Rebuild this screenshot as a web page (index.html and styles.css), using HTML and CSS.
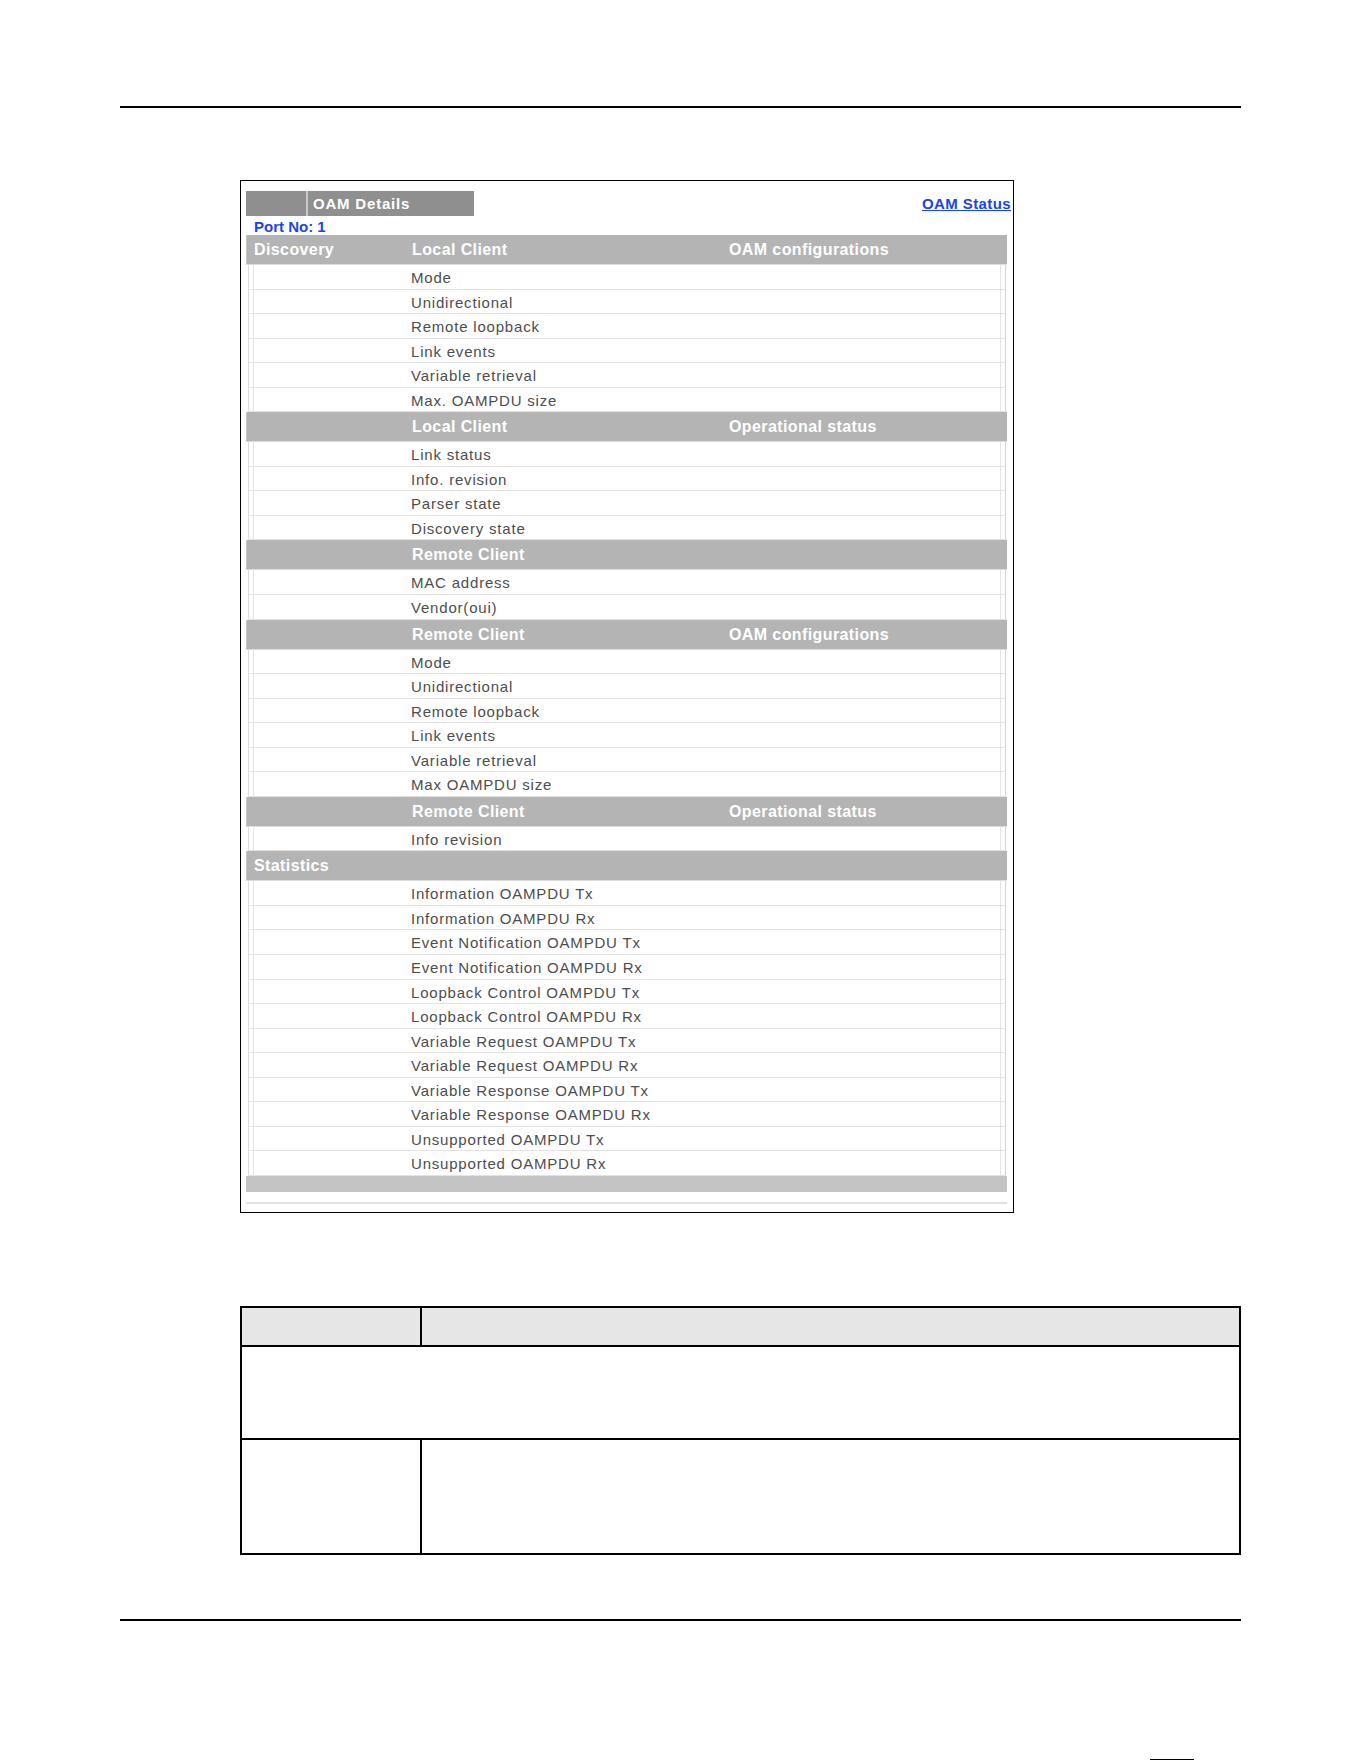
FILE: index.html
```
<!DOCTYPE html>
<html lang="en">
<head>
    <meta charset="UTF-8">
    <title>OAM Details</title>
    <link rel="stylesheet" href="styles.css">
</head>
<body>
    <div class="page">
        <div class="rule"></div>

        <!-- Screenshot of the OAM Details screen -->
        <div class="shot">
            <div class="title-row">
                <div class="title-bar">
                    <span class="title-blank"></span>
                    <span class="title-text">OAM Details</span>
                </div>
                <a class="status-link" href="#">OAM Status</a>
            </div>
            <div class="port">Port No: 1</div>

            <div class="oam-table">
                <div class="head-row"><span>Discovery</span><span>Local Client</span><span>OAM configurations</span></div>
                <div class="data-row"><div class="cells"><span></span><span>Mode</span><span></span></div></div>
                <div class="data-row"><div class="cells"><span></span><span>Unidirectional</span><span></span></div></div>
                <div class="data-row"><div class="cells"><span></span><span>Remote loopback</span><span></span></div></div>
                <div class="data-row"><div class="cells"><span></span><span>Link events</span><span></span></div></div>
                <div class="data-row"><div class="cells"><span></span><span>Variable retrieval</span><span></span></div></div>
                <div class="data-row"><div class="cells"><span></span><span>Max. OAMPDU size</span><span></span></div></div>

                <div class="head-row"><span></span><span>Local Client</span><span>Operational status</span></div>
                <div class="data-row"><div class="cells"><span></span><span>Link status</span><span></span></div></div>
                <div class="data-row"><div class="cells"><span></span><span>Info. revision</span><span></span></div></div>
                <div class="data-row"><div class="cells"><span></span><span>Parser state</span><span></span></div></div>
                <div class="data-row"><div class="cells"><span></span><span>Discovery state</span><span></span></div></div>

                <div class="head-row"><span></span><span>Remote Client</span><span></span></div>
                <div class="data-row"><div class="cells"><span></span><span>MAC address</span><span></span></div></div>
                <div class="data-row"><div class="cells"><span></span><span>Vendor(oui)</span><span></span></div></div>

                <div class="head-row"><span></span><span>Remote Client</span><span>OAM configurations</span></div>
                <div class="data-row"><div class="cells"><span></span><span>Mode</span><span></span></div></div>
                <div class="data-row"><div class="cells"><span></span><span>Unidirectional</span><span></span></div></div>
                <div class="data-row"><div class="cells"><span></span><span>Remote loopback</span><span></span></div></div>
                <div class="data-row"><div class="cells"><span></span><span>Link events</span><span></span></div></div>
                <div class="data-row"><div class="cells"><span></span><span>Variable retrieval</span><span></span></div></div>
                <div class="data-row"><div class="cells"><span></span><span>Max OAMPDU size</span><span></span></div></div>

                <div class="head-row"><span></span><span>Remote Client</span><span>Operational status</span></div>
                <div class="data-row"><div class="cells"><span></span><span>Info revision</span><span></span></div></div>

                <div class="head-row"><span>Statistics</span><span></span><span></span></div>
                <div class="data-row"><div class="cells"><span></span><span>Information OAMPDU Tx</span><span></span></div></div>
                <div class="data-row"><div class="cells"><span></span><span>Information OAMPDU Rx</span><span></span></div></div>
                <div class="data-row"><div class="cells"><span></span><span>Event Notification OAMPDU Tx</span><span></span></div></div>
                <div class="data-row"><div class="cells"><span></span><span>Event Notification OAMPDU Rx</span><span></span></div></div>
                <div class="data-row"><div class="cells"><span></span><span>Loopback Control OAMPDU Tx</span><span></span></div></div>
                <div class="data-row"><div class="cells"><span></span><span>Loopback Control OAMPDU Rx</span><span></span></div></div>
                <div class="data-row"><div class="cells"><span></span><span>Variable Request OAMPDU Tx</span><span></span></div></div>
                <div class="data-row"><div class="cells"><span></span><span>Variable Request OAMPDU Rx</span><span></span></div></div>
                <div class="data-row"><div class="cells"><span></span><span>Variable Response OAMPDU Tx</span><span></span></div></div>
                <div class="data-row"><div class="cells"><span></span><span>Variable Response OAMPDU Rx</span><span></span></div></div>
                <div class="data-row"><div class="cells"><span></span><span>Unsupported OAMPDU Tx</span><span></span></div></div>
                <div class="data-row"><div class="cells"><span></span><span>Unsupported OAMPDU Rx</span><span></span></div></div>
                <div class="foot-bar"></div>
            </div>
            <div class="foot-line"></div>
        </div>

        <!-- Field description table -->
        <div class="desc-table">
            <div class="desc-row desc-head"><div class="desc-label"></div><div class="desc-text"></div></div>
            <div class="desc-row desc-wide"></div>
            <div class="desc-row desc-body"><div class="desc-label"></div><div class="desc-text"></div></div>
        </div>

        <div class="rule rule-bottom"></div>
        <div class="cut-line"></div>
    </div>
</body>
</html>
```

FILE: styles.css
```
body {
    margin: 0;
    padding: 0;
    background-color: #fff;
    font-family: 'Liberation Sans', Arial, sans-serif;
}

.page {
    width: 1361px;
    padding-top: 106px;
}

.rule {
    margin-left: 120px;
    width: 1121px;
    height: 2px;
    background-color: #000;
}

/* screenshot frame */
.shot {
    margin: 72px 0 0 240px;
    width: 774px;
    height: 1033px;
    box-sizing: border-box;
    border: 1px solid #000;
    padding: 10px 6px 0 5px;
}

.title-row {
    display: flex;
    justify-content: space-between;
    align-items: flex-start;
}

.title-bar {
    display: flex;
    width: 228px;
    height: 25px;
    background-color: #8f8f8f;
}

.title-blank {
    width: 60px;
    border-right: 2px solid #c9c9c9;
}

.title-text {
    padding-left: 5px;
    color: #fff;
    font-weight: bold;
    font-size: 15px;
    letter-spacing: 0.8px;
    line-height: 25px;
}

.status-link {
    margin: 4px -4px 0 0;
    color: #1a45e8;
    font-weight: bold;
    font-size: 15px;
    letter-spacing: 0.4px;
    line-height: 17px;
}

.port {
    margin-top: 2px;
    padding-left: 8px;
    height: 17px;
    line-height: 17px;
    color: #1a45e8;
    font-weight: bold;
    font-size: 15px;
}

/* detail table */
.oam-table {
    width: 761px;
}

.head-row {
    display: grid;
    grid-template-columns: 157px 317px 1fr;
    height: 30px;
    box-sizing: border-box;
    padding-top: 1px;
    background-color: #b4b4b4;
    border-left: 1px solid #c4c4c4;
    border-bottom: 1px solid #dcdcdc;
    color: #fff;
    font-weight: bold;
    font-size: 16px;
    letter-spacing: 0.4px;
    line-height: 28px;
}

.head-row span {
    padding-left: 8px;
}

.head-row span:first-child {
    padding-left: 7px;
}

.data-row {
    margin: 0 1px 0 2px;
    padding: 0 4px;
    height: 24.55px;
    box-sizing: border-box;
    border-left: 1px solid #dcdcdc;
    border-right: 1px solid #d4d4d4;
    border-bottom: 1px solid #e2e2e2;
}

.cells {
    display: grid;
    grid-template-columns: 149px 317px 1fr;
    height: 100%;
    border-left: 1px solid #e4e4e4;
    border-right: 1px solid #e4e4e4;
    color: #4d4d4d;
    font-size: 15px;
    letter-spacing: 0.8px;
    line-height: 25px;
}

.cells span {
    padding-left: 8px;
}

.foot-bar {
    height: 16px;
    background-color: #c4c4c4;
}

.foot-line {
    margin-top: 10px;
    width: 761px;
    height: 2px;
    background-color: #e2e2e2;
}

/* description table */
.desc-table {
    margin: 93px 0 0 240px;
    width: 1001px;
    border: 2px solid #000;
    border-bottom: none;
    box-sizing: border-box;
}

.desc-row {
    display: flex;
    border-bottom: 2px solid #000;
    box-sizing: border-box;
}

.desc-label {
    width: 178px;
    border-right: 2px solid #000;
}

.desc-text {
    flex: 1;
}

.desc-head {
    height: 39px;
    background-color: #e6e6e6;
}

.desc-wide {
    height: 93px;
}

.desc-body {
    height: 115px;
}

.rule-bottom {
    margin-top: 64px;
}

.cut-line {
    margin: 138px 0 0 1150px;
    width: 44px;
    height: 1px;
    background-color: #000;
}
```
